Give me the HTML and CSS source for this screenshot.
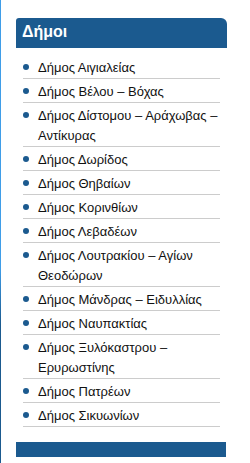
FILE: index.html
```html
<!DOCTYPE html>
<html lang="el">
<head>
  <meta charset="UTF-8" />
  <meta name="viewport" content="width=device-width, initial-scale=1.0"/>
  <title>Δήμοι</title>
  <link rel="stylesheet" href="styles.css">
</head>
<body>

  <!-- sidebar block: municipalities -->
  <div class="block">
    <h2 class="block-title">Δήμοι</h2>

    <ul class="links">
      <li><span class="dot"></span><span>Δήμος Αιγιαλείας</span></li>
      <li><span class="dot"></span><span>Δήμος Βέλου – Βόχας</span></li>
      <li><span class="dot"></span><span>Δήμος Δίστομου – Αράχωβας – Αντίκυρας</span></li>
      <li><span class="dot"></span><span>Δήμος Δωρίδος</span></li>
      <li><span class="dot"></span><span>Δήμος Θηβαίων</span></li>
      <li><span class="dot"></span><span>Δήμος Κορινθίων</span></li>
      <li><span class="dot"></span><span>Δήμος Λεβαδέων</span></li>
      <li><span class="dot"></span><span>Δήμος Λουτρακίου – Αγίων Θεοδώρων</span></li>
      <li><span class="dot"></span><span>Δήμος Μάνδρας – Ειδυλλίας</span></li>
      <li><span class="dot"></span><span>Δήμος Ναυπακτίας</span></li>
      <li><span class="dot"></span><span>Δήμος Ξυλόκαστρου – Ερυρωστίνης</span></li>
      <li><span class="dot"></span><span>Δήμος Πατρέων</span></li>
      <li><span class="dot"></span><span>Δήμος Σικυωνίων</span></li>
    </ul>

    <!-- footer strip -->
    <div class="block-foot"></div>
  </div>

</body>
</html>
```

FILE: styles.css
```css
body {
  margin: 0;
  padding: 18px 0 0 16px;
  font-family: "Liberation Sans", Arial, sans-serif;
  background: linear-gradient(to bottom, #3f9de8 0%, #3f9de8 58%, #1b5a8f 70%, #1b5a8f 100%) no-repeat left top / 1px 100%;
  min-height: 445px;
}
.block {
  width: 211px;
}
.block-title {
  margin: 0;
  padding: 4px 6px 6px;
  font-size: 16px;
  line-height: 20px;
  font-weight: bold;
  color: #fff;
  background-color: #1b5a8f;
  border-radius: 3px 6px 0 0;
}
.links {
  list-style: none;
  margin: 7px 7px 0;
  padding: 0;
}
.links li {
  display: flex;
  align-items: flex-start;
  padding: 3px 0 0;
  border-bottom: 1px solid #cccccc;
  font-size: 13px;
  line-height: 20px;
  color: #111;
}
.dot {
  flex: none;
  width: 6px;
  height: 6px;
  margin: 6px 9px 0 0;
  border-radius: 50%;
  background-color: #1b5a8f;
}
.block-foot {
  width: 210px;
  height: 15px;
  margin-top: 15px;
  background-color: #1b5a8f;
}
```
